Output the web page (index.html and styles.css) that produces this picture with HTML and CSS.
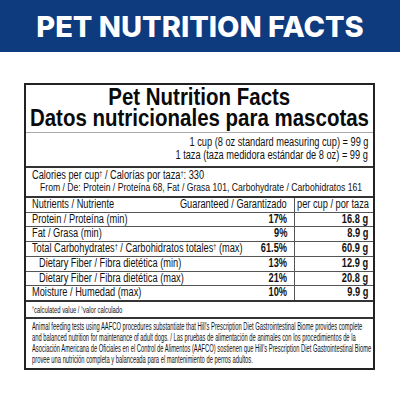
FILE: index.html
```
<!DOCTYPE html>
<html>
<head>
<meta charset="utf-8">
<link rel="stylesheet" href="styles.css">
</head>
<body>
<header class="band"><h1 class="band-title">PET NUTRITION FACTS</h1></header>
<section class="panel">
  <div class="title">
    <div class="title-line"><span class="n nt">Pet Nutrition Facts</span></div>
    <div class="title-line"><span class="n nt">Datos nutricionales para mascotas</span></div>
  </div>
  <div class="serving">
    <div><span class="n nr">1 cup (8 oz standard measuring cup) = 99 g</span></div>
    <div><span class="n nr">1 taza (taza medidora estándar de 8 oz) = 99 g</span></div>
  </div>
  <div class="calories">
    <div><span class="n nl">Calories per cup<sup>†</sup> / Calorías por taza<sup>†</sup>: 330</span></div>
    <div class="from"><span class="n nfr">From / De: Protein / Proteína 68, Fat / Grasa 101, Carbohydrate / Carbohidratos 161</span></div>
  </div>
  <div class="table">
    <div class="row head">
      <div class="c-label"><span class="n nl">Nutrients / Nutriente</span></div>
      <div class="c-guar"><span class="n nr">Guaranteed / Garantizado</span></div>
      <div class="c-cup"><span class="n nl">per cup / por taza</span></div>
    </div>
    <div class="row">
      <div class="c-label"><span class="n nl">Protein / Proteína (min)</span></div>
      <div class="c-guar b"><span class="n nr">17%</span></div>
      <div class="c-cup b"><span class="n nr">16.8 g</span></div>
    </div>
    <div class="row">
      <div class="c-label"><span class="n nl">Fat / Grasa (min)</span></div>
      <div class="c-guar b"><span class="n nr">9%</span></div>
      <div class="c-cup b"><span class="n nr">8.9 g</span></div>
    </div>
    <div class="row">
      <div class="c-label"><span class="n nl">Total Carbohydrates<sup>†</sup> / Carbohidratos totales<sup>†</sup> (max)</span></div>
      <div class="c-guar b"><span class="n nr">61.5%</span></div>
      <div class="c-cup b"><span class="n nr">60.9 g</span></div>
    </div>
    <div class="row">
      <div class="c-label sub"><span class="n nl">Dietary Fiber / Fibra dietética (min)</span></div>
      <div class="c-guar b"><span class="n nr">13%</span></div>
      <div class="c-cup b"><span class="n nr">12.9 g</span></div>
    </div>
    <div class="row">
      <div class="c-label sub"><span class="n nl">Dietary Fiber / Fibra dietética (max)</span></div>
      <div class="c-guar b"><span class="n nr">21%</span></div>
      <div class="c-cup b"><span class="n nr">20.8 g</span></div>
    </div>
    <div class="row last">
      <div class="c-label"><span class="n nl">Moisture / Humedad (max)</span></div>
      <div class="c-guar b"><span class="n nr">10%</span></div>
      <div class="c-cup b"><span class="n nr">9.9 g</span></div>
    </div>
  </div>
  <div class="footnote"><span class="n nf"><sup>†</sup>calculated value / <sup>†</sup>valor calculado</span></div>
  <div class="statement">
    <div><span class="n ns">Animal feeding tests using AAFCO procedures substantiate that Hill's Prescription Diet Gastrointestinal Biome provides complete</span></div>
    <div><span class="n ns">and balanced nutrition for maintenance of adult dogs. / Las pruebas de alimentación de animales con los procedimientos de la</span></div>
    <div><span class="n ns">Asociación Americana de Oficiales en el Control de Alimentos (AAFCO) sostienen que Hill's Prescription Diet Gastrointestinal Biome</span></div>
    <div><span class="n ns">provee una nutrición completa y balanceada para el mantenimiento de perros adultos.</span></div>
  </div>
</section>
</body>
</html>
```
FILE: styles.css
```
* { box-sizing: border-box; }
html, body { margin: 0; padding: 0; }
body {
  width: 400px;
  height: 400px;
  background: #fff;
  overflow: hidden;
  font-family: "Liberation Sans", Arial, sans-serif;
  color: #111;
}
.band {
  height: 52px;
  background: #0e3a7e;
  display: flex;
  align-items: center;
  justify-content: center;
}
.band-title {
  margin: 0;
  color: #fff;
  font-family: Inter, "Liberation Sans", sans-serif;
  font-weight: 800;
  font-size: 29px;
  letter-spacing: 0;
  line-height: 1;
}
.panel {
  margin: 31px 25px 0 24px;
  border: 2px solid #222;
  height: 287px;
  overflow: hidden;
}
.n { display: inline-block; white-space: nowrap; }
.nl { transform: scaleX(0.77); transform-origin: left center; }
.nr { transform: scaleX(0.77); transform-origin: right center; }
.nfr { transform: scaleX(0.75); transform-origin: left center; }
.nt { transform: scaleX(0.89); transform-origin: center center; }
.nf { transform: scaleX(0.62); transform-origin: left center; }
.ns { transform: scaleX(0.58); transform-origin: left center; }

.title {
  font-weight: 700;
  font-size: 23px;
  line-height: 21px;
  padding: 2px 0 3px;
  border-bottom: 1px solid #a8a8a8;
  color: #0a0a0a;
  white-space: nowrap;
}
.title-line { display: flex; justify-content: center; }
.serving {
  text-align: right;
  font-size: 12px;
  line-height: 13px;
  padding: 3px 5px 4px 0;
  border-bottom: 2px solid #333;
  white-space: nowrap;
}
.calories {
  font-size: 12px;
  line-height: 11.5px;
  padding: 2px 4px 3px 6px;
  border-bottom: 2px solid #333;
  white-space: nowrap;
}
.calories .from { padding-left: 8px; font-size: 11.5px; }
sup { font-size: 60%; line-height: 0; vertical-align: 0.45em; }
.table { border-bottom: 2px solid #333; }
.row {
  display: grid;
  grid-template-columns: minmax(0, 1fr) auto 79px;
  font-size: 12px;
  line-height: 13.7px;
  border-bottom: 1px solid #555;
}
.row.last { border-bottom: 0; }
.c-label { padding-left: 6px; white-space: nowrap; }
.c-label.sub { padding-left: 13px; }
.c-guar { text-align: right; padding-right: 7px; }
.c-cup { text-align: right; padding-right: 5px; border-left: 1px solid #555; }
.head .c-cup { text-align: left; padding-left: 2px; }
.b { font-weight: 700; }
.footnote {
  height: 17px;
  border-bottom: 2px solid #333;
  padding: 2px 0 0 6px;
  font-size: 9.5px;
  line-height: 12px;
  white-space: nowrap;
}
.statement {
  padding: 2px 0 0 6px;
  font-size: 10px;
  line-height: 11px;
  white-space: nowrap;
  color: #111;
}
```
